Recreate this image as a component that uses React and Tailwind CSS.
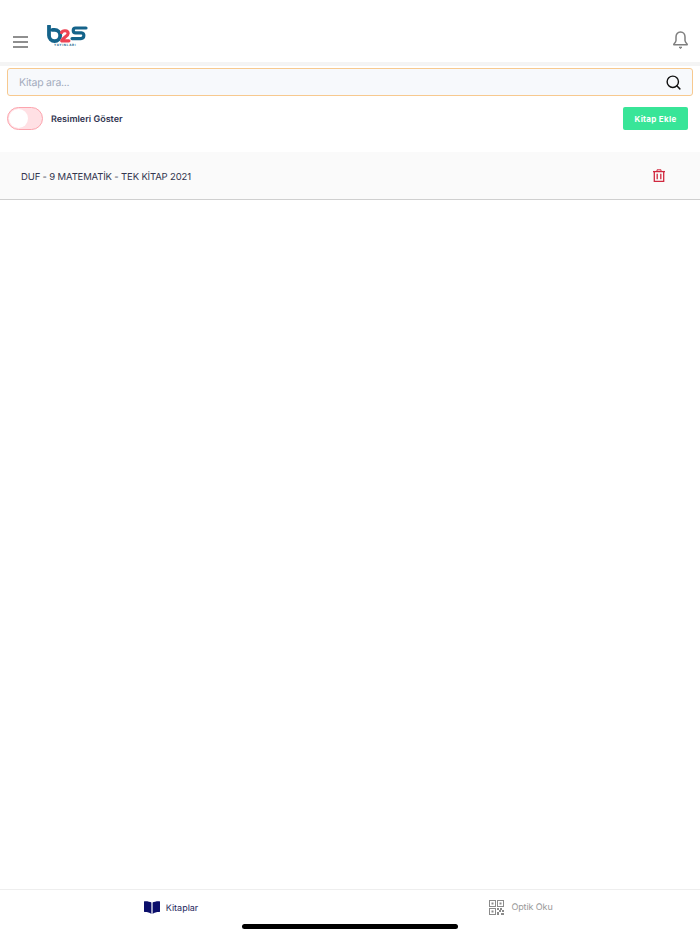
import { Search } from 'lucide-react';

const Logo = () => (
    <svg width="41" height="22" viewBox="0 0 41 22" fill="none">
        {/* b */}
        <path d="M2 1v9.5a5.6 5.6 0 1 0 5.6-5.6H5.5" stroke="#14638a" strokeWidth="3.8" strokeLinecap="round" />
        {/* 2 */}
        <path d="M14.5 7.6c1-2.6 6.6-2.6 6.6 .8 0 2.4-4.4 3.8-6.4 7.4h7.2" stroke="#ee4454" strokeWidth="3.2" strokeLinecap="round" strokeLinejoin="round" />
        {/* s */}
        <path d="M39 3H28.5c-3 0-3 4.8 0 4.8h6c3.4 0 3 5.8-.5 5.8h-9" stroke="#14638a" strokeWidth="3.2" strokeLinecap="round" strokeLinejoin="round" />
        <text x="7" y="20.8" fontSize="3" fontWeight="700" letterSpacing="0.7" fill="#14638a" fontFamily="Inter, sans-serif">YAYINLARI</text>
    </svg>
);

const BellIcon = () => (
    <svg width="15" height="18" viewBox="0 0 15 18" fill="none" stroke="#7f7f7f" strokeWidth="1.5" strokeLinejoin="round">
        <path d="M7.5 1C4.6 1 3 3.2 3 6v3.6c0 1.5-1.1 2.5-2.2 3.6v.6h13.4v-.6c-1.1-1.1-2.2-2.1-2.2-3.6V6c0-2.8-1.6-5-4.5-5z" />
        <path d="M6 16.2h3L7.5 17.5z" fill="#7f7f7f" strokeWidth="1" />
    </svg>
);

const TrashIcon = () => (
    <svg width="12" height="13" viewBox="0 0 12 13" fill="none" stroke="#d0283f" strokeWidth="1.3">
        <path d="M0 2.6h12" />
        <path d="M4 2.4V.8h4v1.6" strokeWidth="1" />
        <path d="M1.3 2.6v9.7h9.4V2.6" />
        <path d="M4.2 4.8v5.4M7.8 4.8v5.4" />
    </svg>
);

const BookIcon = () => (
    <svg width="16" height="13" viewBox="0 0 16 13" fill="#0b0f6b">
        <path d="M7.4 1.6C6 .6 3.2 0 .4 .2 .2 .2 0 .4 0 .7v9.9c0 .3.2.5.5.5 2.6-.1 5 .5 6.9 1.9z" />
        <path d="M8.6 1.6C10 .6 12.8 0 15.6 .2c.2 0 .4.2.4.5v9.9c0 .3-.2.5-.5.5-2.6-.1-5 .5-6.9 1.9z" />
    </svg>
);

const QrIcon = () => (
    <svg width="15" height="15" viewBox="0 0 15 15" fill="none" stroke="#8a8a8a" strokeWidth="1">
        <rect x="0.5" y="0.5" width="6" height="6" />
        <rect x="8.5" y="0.5" width="6" height="6" />
        <rect x="0.5" y="8.5" width="6" height="6" />
        <g fill="#8a8a8a" stroke="none">
            <rect x="2.5" y="2.5" width="2" height="2" />
            <rect x="10.5" y="2.5" width="2" height="2" />
            <rect x="2.5" y="10.5" width="2" height="2" />
            <rect x="8" y="8" width="2" height="2" />
            <rect x="11" y="8" width="2" height="2" />
            <rect x="10" y="10" width="2" height="2" />
            <rect x="13" y="10" width="2" height="2" />
            <rect x="8" y="12" width="2" height="3" />
            <rect x="12" y="13" width="3" height="2" />
        </g>
    </svg>
);

const App = () => {
    return (
        <div className="flex flex-col h-[934px] bg-white font-['Inter',sans-serif] antialiased overflow-hidden [text-rendering:geometricPrecision]">
            {/* Header */}
            <div className="h-[62px] flex items-start justify-between pl-[13px] pr-[12px] shrink-0">
                <div className="flex items-start">
                    <div className="mt-[36px] w-[15px] flex flex-col gap-[3px]">
                        <div className="h-[2px] bg-[#8f8f8f]"></div>
                        <div className="h-[2px] bg-[#8f8f8f]"></div>
                        <div className="h-[2px] bg-[#8f8f8f]"></div>
                    </div>
                    <div className="ml-[19px] mt-[25px]">
                        <Logo />
                    </div>
                </div>
                <div className="mt-[31px]">
                    <BellIcon />
                </div>
            </div>
            <div className="h-[4px] bg-[#f4f4f4] shrink-0"></div>

            {/* Search */}
            <div className="px-[7px] pt-[2px] shrink-0">
                <div className="h-[28px] flex items-center justify-between bg-[#f7f9fc] border border-[#f7c98f] rounded-[3px] pl-[11px] pr-[10px]">
                    <span className="text-[10.5px] tracking-[-0.25px] text-[#a3abbc] pt-[1px]">Kitap ara...</span>
                    <Search className="w-[17px] h-[17px] text-[#111111]" strokeWidth={2} />
                </div>
            </div>

            {/* Toggle and add button */}
            <div className="flex items-center justify-between pl-[7px] pr-[12px] mt-[11px] shrink-0">
                <div className="flex items-center">
                    <div className="w-[36px] h-[23px] rounded-full bg-[#ffe0e4] border border-[#fca5ae] flex items-center">
                        <div className="w-[19px] h-[19px] rounded-full bg-white ml-[1px]"></div>
                    </div>
                    <span className="ml-[8px] pt-[2px] text-[9px] font-semibold text-[#2f3450]">Resimleri Göster</span>
                </div>
                <button className="w-[65px] h-[23px] rounded-[2px] bg-[#38e598] text-white text-[8px] font-bold tracking-[0.3px]">Kitap Ekle</button>
            </div>

            {/* List */}
            <div className="mt-[22px] h-[48px] flex items-center justify-between pl-[21px] pr-[35px] bg-[#fafafa] border-b border-[#cfcfcf] shrink-0">
                <span className="pt-[5px] text-[9.5px] tracking-[-0.15px] text-[#33364f]">DUF - 9 MATEMATİK - TEK KİTAP 2021</span>
                <TrashIcon />
            </div>

            <div className="flex-1"></div>

            {/* Bottom tabs */}
            <div className="h-[45px] border-t border-[#eeeeee] shrink-0 flex flex-col">
                <div className="h-[34px] grid grid-cols-2">
                    <div className="flex items-center justify-center">
                        <div className="mr-[8px] flex items-center gap-[6px]">
                            <BookIcon />
                            <span className="pt-[3px] text-[9px] text-[#23265c]">Kitaplar</span>
                        </div>
                    </div>
                    <div className="flex items-center justify-center">
                        <div className="flex items-center gap-[7px] mr-[8px]">
                            <QrIcon />
                            <span className="pt-[2px] text-[9px] tracking-[-0.1px] text-[#9a9a9a]">Optik Oku</span>
                        </div>
                    </div>
                </div>
                <div className="flex justify-center">
                    <div className="w-[216px] h-[5px] rounded-full bg-black"></div>
                </div>
            </div>
        </div>
    );
};

export default App;
